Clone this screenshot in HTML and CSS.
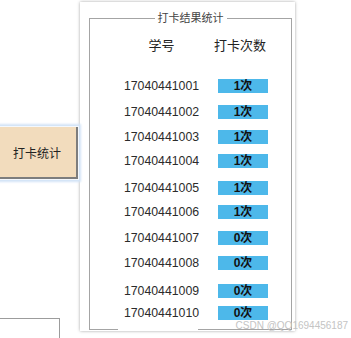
FILE: index.html
```html
<!DOCTYPE html>
<html lang="zh">
<head>
<meta charset="utf-8">
<title>打卡结果统计</title>
<link rel="stylesheet" href="styles.css">
</head>
<body>
<div class="stage">
  <div class="side">
    <button class="btn">打卡统计</button>
    <div class="corner-box"></div>
  </div>
  <section class="panel">
    <div class="group">
      <span class="group-title">打卡结果统计</span>
      <div class="table">
        <div class="row head"><span class="id">学号</span><span class="cnt">打卡次数</span></div>
        <div class="row r1"><span class="id">17040441001</span><span class="badge">1次</span></div>
        <div class="row r2"><span class="id">17040441002</span><span class="badge">1次</span></div>
        <div class="row r3"><span class="id">17040441003</span><span class="badge">1次</span></div>
        <div class="row r4"><span class="id">17040441004</span><span class="badge">1次</span></div>
        <div class="row r5"><span class="id">17040441005</span><span class="badge">1次</span></div>
        <div class="row r6"><span class="id">17040441006</span><span class="badge">1次</span></div>
        <div class="row r7"><span class="id">17040441007</span><span class="badge">0次</span></div>
        <div class="row r8"><span class="id">17040441008</span><span class="badge">0次</span></div>
        <div class="row r9"><span class="id">17040441009</span><span class="badge">0次</span></div>
        <div class="row r10"><span class="id">17040441010</span><span class="badge">0次</span></div>
      </div>
    </div>
  </section>
  <div class="watermark">CSDN @QQ1694456187</div>
</div>
</body>
</html>
```

FILE: styles.css
```css
html, body {
  margin: 0;
  background: #fff;
}
body {
  width: 351px;
  height: 338px;
  overflow: hidden;
  position: relative;
  font-family: "Liberation Sans", "Noto Sans CJK SC", sans-serif;
}
.stage {
  display: flex;
  height: 338px;
}
.side {
  width: 78px;
  flex: none;
  display: flex;
  flex-direction: column;
  align-items: flex-start;
  padding-top: 127px;
  box-sizing: border-box;
}
.btn {
  position: relative;
  z-index: 1;
  width: 78px;
  height: 53px;
  box-sizing: border-box;
  margin: 0;
  padding: 0 0 0 13px;
  text-align: left;
  background: #f2dcbd;
  border: none;
  border-right: 2px solid #7d7d7d;
  border-bottom: 2px solid #7d7d7d;
  box-shadow: 0 0 0 1px #f4f8fd, 0 0 2px 3px #d3e4f7;
  font-family: "Noto Sans CJK SC", sans-serif;
  font-size: 12px;
  color: #222;
}
.corner-box {
  margin-top: 139px;
  width: 60px;
  height: 20px;
  box-sizing: border-box;
  border-top: 1px solid #9c9c9c;
  border-right: 1px solid #9c9c9c;
}
.panel {
  flex: none;
  margin: 2px 0 0 2px;
  width: 215px;
  height: 329px;
  background: #fff;
  box-shadow: 0 0 3px rgba(0, 0, 0, 0.35);
  padding: 16px 3px 0 9px;
  box-sizing: border-box;
}
.group {
  position: relative;
  border: 1px solid #a4a4a4;
  height: 312px;
  box-sizing: border-box;
}
.group::after {
  content: "";
  position: absolute;
  left: 28px;
  bottom: -1px;
  width: 80px;
  height: 1px;
  background: #fff;
}
.group-title {
  position: absolute;
  top: -9px;
  left: 0;
  right: 0;
  margin: 0 auto;
  width: max-content;
  background: #fff;
  padding: 0 3px;
  font-family: "Noto Sans CJK SC", sans-serif;
  font-size: 11px;
  line-height: 14px;
  color: #444;
}
.table {
  padding-top: 18px;
}
.row {
  display: flex;
  align-items: center;
  height: 25px;
  padding-left: 33px;
}
.id {
  width: 77px;
  text-align: center;
  font-size: 12.3px;
  color: #2b2b2b;
}
.head {
  height: 16px;
}
.head .id,
.head .cnt {
  font-family: "Noto Sans CJK SC", sans-serif;
  font-size: 13px;
  line-height: 16px;
  color: #222;
}
.cnt {
  margin-left: 12px;
  width: 56px;
  text-align: center;
}
.badge {
  margin-left: 18px;
  width: 50px;
  height: 14px;
  background: #4db8ea;
  text-align: center;
  font-family: "Liberation Sans", "Noto Sans CJK SC", sans-serif;
  font-weight: bold;
  font-size: 12px;
  line-height: 14px;
  color: #111;
}
.r1 { margin-top: 20px; }
.r2 { margin-top: 1px; }
.r3 { margin-top: 0; }
.r4 { margin-top: -1px; }
.r5 { margin-top: 2px; }
.r6 { margin-top: -1px; }
.r7 { margin-top: 1px; }
.r8 { margin-top: 0; }
.r9 { margin-top: 3px; }
.r10 { margin-top: -3px; }
.watermark {
  position: absolute;
  right: 3px;
  bottom: 6px;
  font-size: 10px;
  line-height: 12px;
  color: #c4c4c4;
}
```
